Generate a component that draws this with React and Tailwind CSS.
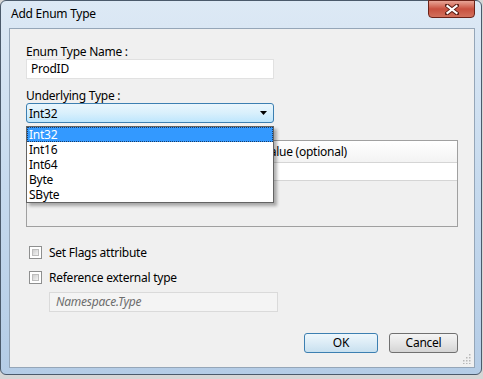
import React from 'react';

const font = { fontFamily: '"Noto Sans", "Segoe UI", sans-serif' };

function CheckBox({ label }) {
  return (
    <div className="flex items-center h-[13px] pl-[3px]">
      <div className="w-[13px] h-[13px] border border-[#8e8f8f] bg-white p-[2px]">
        <div className="w-full h-full bg-gradient-to-br from-[#cfcfcf] to-[#f4f4f4] border border-[#bdbdbd]" />
      </div>
      <span className="ml-[7px] text-[12px] leading-[15px] text-black">{label}</span>
    </div>
  );
}

export default function App() {
  const items = ['Int32', 'Int16', 'Int64', 'Byte', 'SByte'];

  return (
    <div className="relative w-[483px] h-[379px] overflow-hidden bg-[#d6d6d6] tracking-[-0.25px]" style={font}>
      {/* window */}
      <div className="absolute left-0 top-0 w-[482px] h-[375px] rounded-[6px] border border-[#4b5a6b] bg-gradient-to-b from-[#dde9f5] via-[#c6daee] to-[#b4cce6] flex flex-col">
        {/* title bar */}
        <div className="h-[27px] flex items-start justify-between pl-[10px]">
          <span className="mt-[5px] text-[12px] leading-[15px] text-black">Add Enum Type</span>
          <div className="w-[47px] h-[18px] mt-[-1px] mr-[6px] rounded-b-[4px] border border-[#6b2218] bg-gradient-to-b from-[#e8a597] via-[#c8503f] to-[#d2705c] flex items-center justify-center">
            <svg width="14" height="11" viewBox="0 0 14 11">
              <path d="M2 1.5 L12 9.5 M12 1.5 L2 9.5" stroke="#5a1d14" strokeWidth="4" strokeLinecap="square" />
              <path d="M2.5 2 L11.5 9 M11.5 2 L2.5 9" stroke="#ffffff" strokeWidth="2.2" strokeLinecap="square" />
            </svg>
          </div>
        </div>

        {/* content panel */}
        <div className="ml-[8px] w-[466px] h-[340px] border border-[#95a6b8] bg-[#f0f0f0] pt-[15px] pl-[16px] flex flex-col relative">
          <span className="text-[12px] leading-[15px] text-black">Enum Type Name :</span>
          <div className="w-[248px] h-[20px] border border-[#e1e1e1] bg-white pl-[4px] text-[12px] leading-[18px] text-black">ProdID</div>

          <span className="mt-[9px] text-[12px] leading-[15px] text-black">Underlying Type :</span>
          <div className="w-[248px] h-[20px] rounded-[3px] border border-[#3c7fb1] bg-gradient-to-b from-[#eaf6fd] via-[#d9f0fc] to-[#bee6fd] pl-[2px] pr-[6px] flex items-center justify-between">
            <span className="text-[12px] leading-[15px] text-black">Int32</span>
            <svg width="7" height="4" viewBox="0 0 7 4"><path d="M0 0 H7 L3.5 4 Z" fill="#000" /></svg>
          </div>

          {/* members box */}
          <div className="mt-[17px] w-[432px] h-[87px] border border-[#a0a0a0] bg-[#f0f0f0] flex flex-col">
            <div className="h-[22px] flex border-b border-[#d5d5d5] bg-gradient-to-b from-white to-[#f3f3f3] text-[12px] leading-[21px] text-black">
              <span className="w-[234px] border-r border-[#e3e3e3]" />
              <span className="pl-[2px]">Value (optional)</span>
            </div>
            <div className="h-[18px] bg-white border-b border-[#d5d5d5]" />
          </div>

          <div className="mt-[19px] flex flex-col gap-[12px]">
            <CheckBox label="Set Flags attribute" />
            <CheckBox label="Reference external type" />
          </div>
          <div className="mt-[8px] ml-[23px] w-[229px] h-[20px] border border-[#dadada] bg-[#f4f4f4] pl-[6px] text-[12px] leading-[18px] italic text-[#6d6d6d]">
            Namespace.Type
          </div>

          <div className="mt-[21px] flex justify-end pr-[16px] gap-[11px]">
            <div className="w-[74px] h-[20px] rounded-[3px] border border-[#3c7fb1] bg-gradient-to-b from-[#eef7fc] via-[#dcecf6] to-[#c8e0ef] flex items-center justify-center text-[12px] text-black">OK</div>
            <div className="w-[69px] h-[20px] rounded-[3px] border border-[#707070] bg-gradient-to-b from-[#f4f4f4] via-[#e6e6e6] to-[#d4d4d4] flex items-center justify-center text-[12px] text-black">Cancel</div>
          </div>

          {/* size grip */}
          <svg className="absolute right-[3px] bottom-[3px]" width="10" height="10" viewBox="0 0 10 10">
            {[[8, 0], [8, 3], [5, 3], [8, 6], [5, 6], [2, 6], [8, 9], [5, 9], [2, 9]].map(([x, y], i) => (
              <rect key={i} x={x} y={y} width="1.5" height="1.5" fill="#b8b8b8" />
            ))}
          </svg>

          {/* dropdown list */}
          <div className="absolute left-[16px] top-[97px] w-[248px] border border-[#646464] bg-white shadow-[3px_3px_3px_rgba(0,0,0,0.3)]">
            {items.map((it, i) => (
              <div
                key={it}
                className={
                  i === 0
                    ? 'h-[15px] pl-[2px] bg-[#3399ff] text-white outline-1 outline-dotted outline-[#1a3d66] -outline-offset-1 text-[12px] leading-[15px]'
                    : 'h-[15px] pl-[2px] text-black text-[12px] leading-[15px]'
                }
              >
                {it}
              </div>
            ))}
          </div>
        </div>
      </div>
    </div>
  );
}
